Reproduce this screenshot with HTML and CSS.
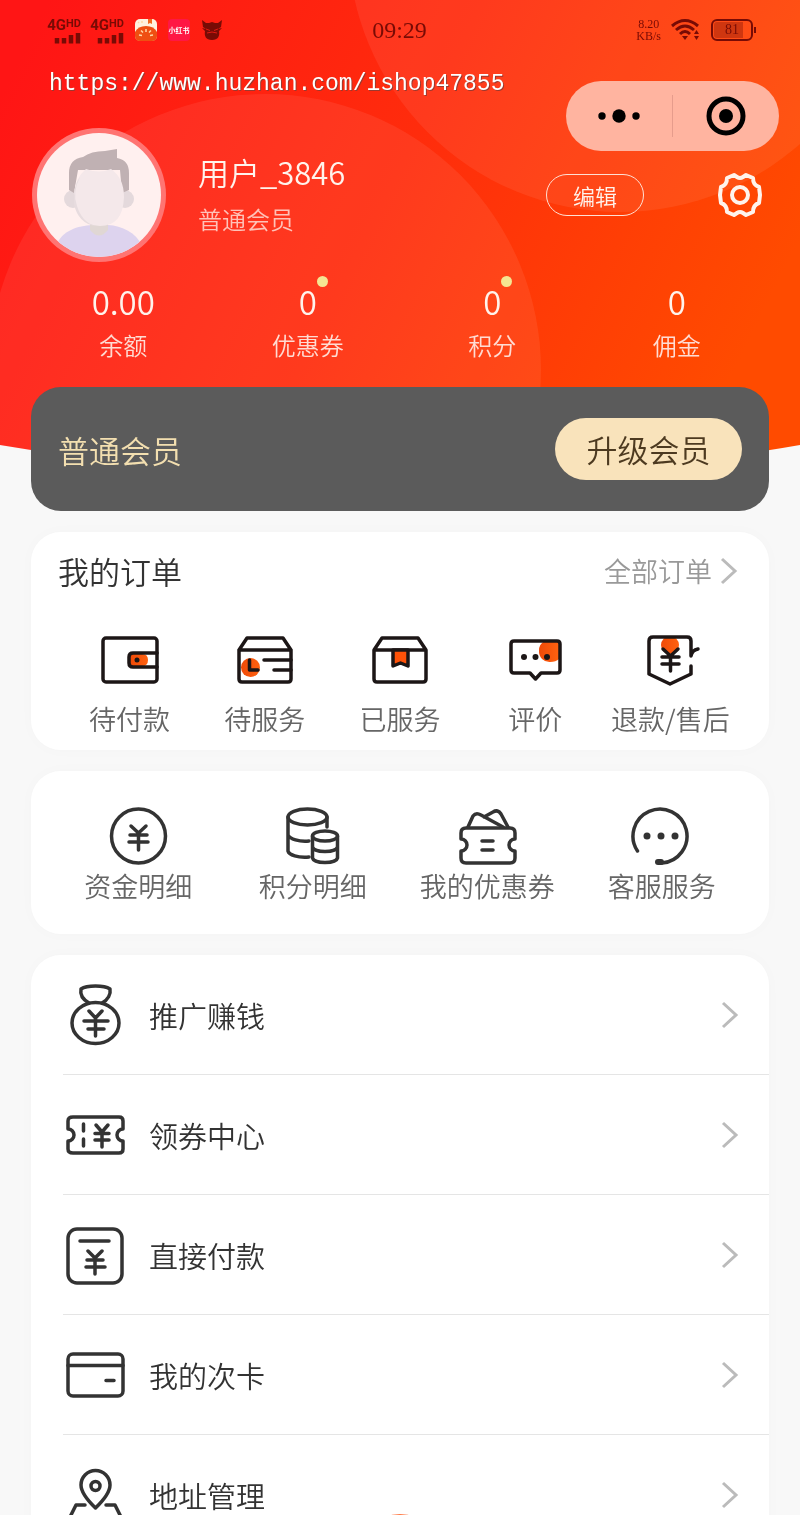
FILE: index.html
```html
<!DOCTYPE html>
<html lang="zh-CN">
<head>
    <meta charset="UTF-8">
    <meta name="viewport" content="width=device-width, initial-scale=1.0">
    <title>我的</title>
    <link rel="stylesheet" href="styles.css">
</head>
<body>
    <div class="app">
        <svg class="header-bg" viewBox="0 0 800 480" preserveAspectRatio="none" aria-hidden="true">
            <defs>
                <linearGradient id="headerGradient" x1="0" y1="0.2" x2="1" y2="0.5">
                    <stop offset="0" stop-color="#ff1515"/>
                    <stop offset="0.5" stop-color="#ff2c0c"/>
                    <stop offset="1" stop-color="#ff4b00"/>
                </linearGradient>
                <linearGradient id="orange" x1="0" y1="0" x2="1" y2="0">
                    <stop offset="0" stop-color="#f04a08"/>
                    <stop offset="1" stop-color="#ff6210"/>
                </linearGradient>
                <clipPath id="headerShape">
                    <path d="M0 0H800V445Q400 515 0 445Z"/>
                </clipPath>
            </defs>
            <g clip-path="url(#headerShape)">
                <rect width="800" height="480" fill="url(#headerGradient)"/>
                <circle cx="265" cy="370" r="276" fill="#fff" opacity="0.07"/>
                <circle cx="620" cy="-60" r="272" fill="#fff" opacity="0.07"/>
            </g>
        </svg>

        <div class="status-bar">
            <div class="status-left">
                <div class="signal">
                    <span class="signal-name">4G<small>HD</small></span>
                    <svg width="27" height="12" viewBox="0 0 27 12"><path d="M3 11.500V6M10 11.500V6M17 11.500V3M24 11.500V1" stroke="currentColor" stroke-width="4.500"/></svg>
                </div>
                <div class="signal">
                    <span class="signal-name">4G<small>HD</small></span>
                    <svg width="27" height="12" viewBox="0 0 27 12"><path d="M3 11.500V6M10 11.500V6M17 11.500V3M24 11.500V1" stroke="currentColor" stroke-width="4.500"/></svg>
                </div>
                <svg class="notice" width="24" height="24" viewBox="0 0 24 24">
                    <rect x="1" y="1" width="22" height="22" rx="5" fill="#fff1df"/>
                    <path d="M14 1h4v5l-2-1-2 1z" fill="#f26a20"/>
                    <path d="M1 14Q4 8 12 8T23 14V18Q23 23 18 23H6Q1 23 1 18Z" fill="#ef4f12"/>
                    <path d="M5 17l3 .5M7 12.500l2 2M12 11v3M17 12.500l-2 2M19 17l-3 .5M4 4l1 1M8 3v2" stroke="#ffd9a5" stroke-width="1.500"/>
                </svg>
                <span class="notice notice-red">小红书</span>
                <svg class="notice" width="24" height="24" viewBox="0 0 24 24" fill="currentColor">
                    <path d="M2 2l4 3h3l3-1 3 1h3l4-3-1 7-3 2 4-1-3 3c1 5-1 9-7 9s-8-4-7-9L2 10l4 1-3-2Z"/>
                    <path d="M6 11l4 1.500M18 11l-4 1.500M7 15q5-2 10 0" stroke="#e01a12" fill="none"/>
                </svg>
            </div>
            <time class="clock">09:29</time>
            <div class="status-right">
                <span class="speed">8.20<br>KB/s</span>
                <svg width="30" height="24" viewBox="0 0 30 24" fill="none" stroke="currentColor" stroke-width="3">
                    <path d="M1 8Q14-3 27 8M5 12Q14 4 23 12M9 16Q14 11 19 16"/>
                    <path d="M11 18h6l-3 4Z" fill="currentColor" stroke="none"/>
                    <path d="M23 16l2.500-4 2.500 4ZM23 18l2.500 4 2.500-4Z" fill="currentColor" stroke="none"/>
                </svg>
                <span class="battery">81</span>
            </div>
        </div>

        <div class="capsule">
            <button class="capsule-btn" aria-label="更多">
                <svg width="44" height="16" viewBox="0 0 44 16"><circle cx="5" cy="8" r="3.700"/><circle cx="22" cy="8" r="6.700"/><circle cx="39" cy="8" r="3.700"/></svg>
            </button>
            <button class="capsule-btn" aria-label="关闭">
                <svg width="40" height="40" viewBox="0 0 40 40"><circle cx="20" cy="20" r="17" fill="none" stroke="#000" stroke-width="5"/><circle cx="20" cy="20" r="7"/></svg>
            </button>
        </div>

        <p class="site-url">https://www.huzhan.com/ishop47855</p>

        <header class="profile">
            <svg class="avatar" viewBox="0 0 134 134">
                <defs><clipPath id="face"><circle cx="67" cy="67" r="62"/></clipPath></defs>
                <circle cx="67" cy="67" r="67" fill="#ff7472"/>
                <circle cx="67" cy="67" r="62" fill="#fff0ef"/>
                <g clip-path="url(#face)">
                    <path d="M24 118C30 102 46 98 60 97H76C90 98 104 104 110 118V134H24Z" fill="#ddd3ee"/>
                    <path d="M58 94h18v8q-9 11-18 0Z" fill="#e0d7d4"/>
                    <circle cx="41" cy="71" r="9" fill="#e4d9dc"/>
                    <circle cx="93" cy="71" r="9" fill="#e4d9dc"/>
                    <path d="M37 62V45Q37 31 51 29Q59 23 73 23L85 21V30Q97 32 97 45V62L90 65L88 42H46L42 65Z" fill="#c0b1b3"/>
                    <path d="M42 66Q43 50 54 41Q67 46 79 41Q92 50 92 69Q91 98 68 98Q43 97 42 66Z" fill="#f4e8ea"/>
                    <path d="M48 49Q40 65 45 78Q50 94 63 98Q46 95 42 76Q41 58 48 49Z" fill="#e7dcdf"/>
                </g>
            </svg>
            <div class="profile-info">
                <h1 class="user-name">用户_3846</h1>
                <p class="user-level">普通会员</p>
            </div>
            <button class="edit-btn">编辑</button>
            <button class="setting-btn" aria-label="设置">
                <svg width="46" height="46" viewBox="0 0 46 46" fill="none" stroke="#fff3ec" stroke-width="4" stroke-linejoin="round">
                    <path d="M17 3L20 5Q23 7 26 5L29 3L36 6Q36 13 42 15L43 23L42 31Q36 33 36 40L29 43L26 41Q23 39 20 41L17 43L10 40Q10 33 4 31L3 23L4 15Q10 13 10 6Z"/>
                    <circle cx="23" cy="23" r="8"/>
                </svg>
            </button>
        </header>

        <div class="stats">
            <a class="stat" href="#"><span class="stat-num">0.00</span><span class="stat-label">余额</span></a>
            <a class="stat" href="#"><span class="stat-num has-dot">0</span><span class="stat-label">优惠券</span></a>
            <a class="stat" href="#"><span class="stat-num has-dot">0</span><span class="stat-label">积分</span></a>
            <a class="stat" href="#"><span class="stat-num">0</span><span class="stat-label">佣金</span></a>
        </div>

        <main class="content">
            <section class="member">
                <span>普通会员</span>
                <button class="upgrade-btn">升级会员</button>
            </section>

            <section class="card orders">
                <div class="orders-head">
                    <h2>我的订单</h2>
                    <a class="all-orders" href="#">全部订单<svg class="arrow" viewBox="0 0 18 28"><path d="M2 2L15 14L2 26"/></svg></a>
                </div>
                <nav class="order-grid">
                    <a class="item" href="#">
                        <svg class="icon" viewBox="0 0 64 64">
                            <path d="M32 26H44Q50 26 50 32T44 38H32Z" fill="url(#orange)" stroke="none"/>
                            <rect x="5" y="10" width="54" height="44" rx="3"/>
                            <path d="M59 25H35Q31 25 31 29V35Q31 39 35 39H59"/>
                            <circle cx="39" cy="32" r="2.500" fill="currentColor" stroke="none"/>
                        </svg>
                        <span>待付款</span>
                    </a>
                    <a class="item" href="#">
                        <svg class="icon" viewBox="0 0 64 64">
                            <circle cx="17.500" cy="39.500" r="9.500" fill="url(#orange)" stroke="none"/>
                            <path d="M6 22V51Q6 54 9 54H55Q58 54 58 51V22ZM6 22L14 10H50L58 22"/>
                            <path d="M16.500 32V42H25M31 32H58M41 42H58"/>
                        </svg>
                        <span>待服务</span>
                    </a>
                    <a class="item" href="#">
                        <svg class="icon" viewBox="0 0 64 64">
                            <path d="M6 22V51Q6 54 9 54H55Q58 54 58 51V22ZM6 22L14 10H50L58 22"/>
                            <path d="M25 22V38L32.500 35L40 38V22Z" fill="#ff5208"/>
                        </svg>
                        <span>已服务</span>
                    </a>
                    <a class="item" href="#">
                        <svg class="icon" viewBox="0 0 64 64">
                            <path d="M36 23A10.500 10.500 0 0 1 42 13H56V31Q53 34 47 34A10.500 10.500 0 0 1 36 23Z" fill="url(#orange)" stroke="none"/>
                            <path d="M11 13H54Q57 13 57 16V42Q57 45 54 45H38L32.500 51L27 45H11Q8 45 8 42V16Q8 13 11 13Z"/>
                            <g fill="currentColor" stroke="none"><circle cx="21" cy="29" r="3"/><circle cx="32.500" cy="29" r="3"/><circle cx="44" cy="29" r="3"/></g>
                        </svg>
                        <span>评价</span>
                    </a>
                    <a class="item" href="#">
                        <svg class="icon" viewBox="0 0 64 64">
                            <circle cx="32" cy="17" r="9" fill="url(#orange)" stroke="none"/>
                            <path d="M53 38V46L32 56L11 46V13Q11 9 15 9H49Q53 9 53 13V28Q54 22 60 21"/>
                            <path d="M25 21L32.500 28L40 21M32.500 28V43M24 29H41M24 36H41"/>
                        </svg>
                        <span>退款/售后</span>
                    </a>
                </nav>
            </section>

            <nav class="card services">
                <a class="item" href="#">
                    <svg class="icon" viewBox="0 0 64 64">
                        <circle cx="32.500" cy="32" r="27"/>
                        <path d="M25 22L32.500 29L40 22M32.500 29V46M24 31H41M23 38H42"/>
                    </svg>
                    <span>资金明细</span>
                </a>
                <a class="item" href="#">
                    <svg class="icon" viewBox="0 0 64 64">
                        <ellipse cx="26.500" cy="13" rx="19.500" ry="8"/>
                        <path d="M7 13V47C8 51 17 54 28 53M7 31C9 35 18 38 28 37M46 13V23"/>
                        <ellipse cx="44" cy="32" rx="12.500" ry="5"/>
                        <path d="M31.500 32V54C33 60 55 60 56.500 54V32M31.500 43C33 49 55 49 56.500 43"/>
                    </svg>
                    <span>积分明细</span>
                </a>
                <a class="item" href="#">
                    <svg class="icon" viewBox="0 0 64 64">
                        <path d="M11 24H55Q60 24 60 29V35A6 6 0 0 0 60 47V54Q60 59 55 59H11Q6 59 6 54V47A6 6 0 0 0 6 35V29Q6 24 11 24Z"/>
                        <path d="M13 23L18 12Q21 8 26 11L48 23M29 13L38 8Q43 5 46 10L53 23M27 37H38M27 46H38"/>
                    </svg>
                    <span>我的优惠券</span>
                </a>
                <a class="item" href="#">
                    <svg class="icon" viewBox="0 0 64 64">
                        <path d="M7.500 47A27 27 0 1 1 32 59"/>
                        <rect x="25" y="55" width="9" height="6" rx="3" fill="currentColor" stroke="none"/>
                        <g fill="currentColor" stroke="none"><circle cx="17" cy="32" r="3.500"/><circle cx="31" cy="32" r="3.500"/><circle cx="45" cy="32" r="3.500"/></g>
                    </svg>
                    <span>客服服务</span>
                </a>
            </nav>

            <ul class="card menu">
                <li><a class="menu-link" href="#">
                    <svg class="icon" viewBox="0 0 64 64">
                        <ellipse cx="32.500" cy="40" rx="23.500" ry="20.500"/>
                        <path d="M26 20C19 16 17 11 18 6C24 2 41 2 47 6C48 11 45 17 39 20"/>
                        <path d="M26 28L32.500 35L39 28M32.500 35V53M21 38H45M25 46H41"/>
                    </svg>
                    <span>推广赚钱</span>
                    <svg class="arrow" viewBox="0 0 18 28"><path d="M2 2L15 14L2 26"/></svg>
                </a></li>
                <li><a class="menu-link" href="#">
                    <svg class="icon" viewBox="0 0 64 64">
                        <path d="M10 14H56Q60 14 60 18V26A6 6 0 0 0 60 38V46Q60 50 56 50H10Q5 50 5 46V38A6 6 0 0 0 5 26V18Q5 14 10 14Z"/>
                        <path d="M20.500 21V28M20.500 36V43M33 22L39 29L45 22M39 29V44M32 30.500H46M32 37H46"/>
                    </svg>
                    <span>领券中心</span>
                    <svg class="arrow" viewBox="0 0 18 28"><path d="M2 2L15 14L2 26"/></svg>
                </a></li>
                <li><a class="menu-link" href="#">
                    <svg class="icon" viewBox="0 0 64 64">
                        <rect x="5" y="6" width="54" height="54" rx="9"/>
                        <path d="M17 18H46M25 28L32 35L39 28M32 35V51M24 37H40M23 44H42"/>
                    </svg>
                    <span>直接付款</span>
                    <svg class="arrow" viewBox="0 0 18 28"><path d="M2 2L15 14L2 26"/></svg>
                </a></li>
                <li><a class="menu-link" href="#">
                    <svg class="icon" viewBox="0 0 64 64">
                        <rect x="5" y="11" width="55" height="42" rx="5"/>
                        <path d="M5 22.500H60M43 37.500H51"/>
                    </svg>
                    <span>我的次卡</span>
                    <svg class="arrow" viewBox="0 0 18 28"><path d="M2 2L15 14L2 26"/></svg>
                </a></li>
                <li><a class="menu-link" href="#">
                    <svg class="icon" viewBox="0 0 64 64">
                        <path d="M32.500 45Q18 31 18 22A14.500 14.500 0 0 1 47 22Q47 31 32.500 45Z"/>
                        <circle cx="32.500" cy="23" r="4.500"/>
                        <path d="M22 42H13L4 60H61L52 42H43"/>
                    </svg>
                    <span>地址管理</span>
                    <svg class="arrow" viewBox="0 0 18 28"><path d="M2 2L15 14L2 26"/></svg>
                </a></li>
            </ul>
        </main>
        <div class="tab-bump"></div>
    </div>
</body>
</html>
```

FILE: styles.css
```css
* {
    box-sizing: border-box;
}
body {
    margin: 0;
    background: #f8f8f8;
    color: #333;
    font-family: "Noto Sans CJK SC", sans-serif;
    font-weight: 350;
}
h1, h2, p, ul {
    margin: 0;
    padding: 0;
    font-weight: inherit;
}
ul {
    list-style: none;
}
a {
    color: inherit;
    text-decoration: none;
}
button {
    border: none;
    padding: 0;
    background: none;
    color: inherit;
    font: inherit;
    cursor: pointer;
}
svg {
    display: block;
    flex-shrink: 0;
}
.app {
    position: relative;
    height: 100vh;
    overflow: hidden auto;
    scrollbar-width: none;
}
.header-bg {
    position: absolute;
    top: 0;
    left: 0;
    width: 100%;
    height: 480px;
    z-index: -1;
}

/* status bar */
.status-bar {
    display: grid;
    grid-template-columns: 1fr auto 1fr;
    align-items: center;
    height: 60px;
    padding: 0 47px 0 46px;
    color: #780b05;
}
.status-left, .status-right {
    display: flex;
    align-items: center;
    gap: 8px;
}
.status-right {
    justify-content: flex-end;
    gap: 10px;
}
.signal {
    display: flex;
    flex-direction: column;
    align-items: flex-end;
    width: 35px;
}
.signal-name {
    font: bold 15px/13px Roboto, sans-serif;
    white-space: nowrap;
}
.signal-name small {
    font-size: 11px;
    vertical-align: 3px;
}
.notice {
    margin-left: 2px;
}
.notice-red {
    width: 22px;
    border-radius: 4px;
    background: #ff1744;
    color: #fff;
    font-size: 7px;
    font-weight: bold;
    line-height: 22px;
    text-align: center;
}
.clock {
    font: 24px/30px "Liberation Serif", serif;
}
.speed {
    font: 12px/12px "Liberation Serif", serif;
    text-align: center;
}
.battery {
    position: relative;
    width: 42px;
    border: 2px solid #780b05;
    border-radius: 6px;
    background: linear-gradient(90deg, #cf3610 80%, transparent 80%) content-box;
    padding: 1px;
    font: 14px/16px "Liberation Serif", serif;
    text-align: center;
}
.battery::after {
    content: "";
    position: absolute;
    right: -5px;
    top: 6px;
    width: 2px;
    height: 6px;
    background: #780b05;
}

/* floating mini program menu */
.capsule {
    position: absolute;
    top: 81px;
    right: 21px;
    display: flex;
    align-items: center;
    width: 213px;
    height: 70px;
    border-radius: 35px;
    background: #ffb4a0;
}
.capsule-btn {
    display: flex;
    flex: 1;
    align-items: center;
    justify-content: center;
    height: 42px;
}
.capsule-btn + .capsule-btn {
    border-left: 1px solid #e69c8c;
}

.site-url {
    padding: 10px 49px 0;
    color: #fff;
    font: 23px/28px "Liberation Mono", monospace;
    text-shadow: 1px 1px 0 #9a3a30;
}

/* profile */
.profile {
    display: flex;
    align-items: center;
    padding: 30px 37px 0 32px;
    color: #fff3ec;
}
.avatar {
    width: 134px;
    height: 134px;
}
.profile-info {
    flex: 1;
    padding-left: 32px;
}
.user-name {
    font-size: 31px;
    line-height: 48px;
}
.user-level {
    color: #ffc2b8;
    font-size: 24px;
    line-height: 46px;
}
.edit-btn {
    width: 98px;
    height: 42px;
    margin-right: 73px;
    border: 1px solid #ffe0d4;
    border-radius: 21px;
    font-size: 22px;
    line-height: 40px;
}
.setting-btn {
    width: 46px;
    height: 46px;
}

.stats {
    display: grid;
    grid-template-columns: repeat(4, 1fr);
    padding: 16px 31px 21px;
    color: #fff3ec;
    text-align: center;
}
.stat {
    display: flex;
    flex-direction: column;
    align-items: center;
}
.stat-num {
    position: relative;
    font-size: 33px;
    line-height: 46px;
}
.stat-num.has-dot::after {
    content: "";
    position: absolute;
    top: -2px;
    right: -11px;
    width: 11px;
    height: 11px;
    border-radius: 50%;
    background: #f5e592;
}
.stat-label {
    color: #ffdcd3;
    font-size: 24px;
    line-height: 42px;
}

/* cards */
.content {
    display: flex;
    flex-direction: column;
    gap: 21px;
    padding: 0 31px;
}
.member {
    display: flex;
    align-items: center;
    justify-content: space-between;
    height: 124px;
    padding: 0 27px;
    border-radius: 30px;
    background: #5b5b5b;
    color: #f3dfb0;
    font-size: 31px;
}
.upgrade-btn {
    width: 187px;
    height: 62px;
    border-radius: 31px;
    background: #f9e3bb;
    color: #4d3a20;
    line-height: 62px;
}
.card {
    border-radius: 30px;
    background: #fff;
    box-shadow: 0 0 16px rgba(0, 0, 0, 0.02);
}
.orders {
    padding: 21px 31px 13px;
}
.orders-head {
    display: flex;
    justify-content: space-between;
    margin: 0 0 39px -4px;
    line-height: 36px;
}
.orders-head h2 {
    font-size: 31px;
}
.all-orders {
    display: flex;
    align-items: center;
    gap: 8px;
    color: #999;
    font-size: 27px;
}
.arrow {
    width: 18px;
    height: 28px;
    fill: none;
    stroke: #bbb;
    stroke-width: 3;
}
.order-grid {
    display: grid;
    grid-template-columns: repeat(5, 1fr);
}
.order-grid .item {
    gap: 9px;
    color: #1c1616;
}
.item {
    display: flex;
    flex-direction: column;
    align-items: center;
    color: #333;
}
.item span {
    color: #666;
    font-size: 27px;
    line-height: 36px;
    white-space: nowrap;
}
.icon {
    width: 64px;
    height: 64px;
    fill: none;
    stroke: currentColor;
    stroke-width: 3.5;
    stroke-linecap: round;
    stroke-linejoin: round;
}
.services {
    display: grid;
    grid-template-columns: repeat(4, 1fr);
    padding: 33px 20px 30px;
}
.menu li {
    height: 120px;
    margin-left: 32px;
    border-bottom: 1px solid #e5e5e5;
}
.menu-link {
    display: flex;
    align-items: center;
    gap: 22px;
    height: 100%;
    padding-right: 30px;
    font-size: 29px;
}
.menu-link span {
    flex: 1;
}

/* top edge of the round tab button */
.tab-bump {
    position: fixed;
    bottom: -79px;
    left: 50%;
    width: 80px;
    height: 80px;
    margin-left: -40px;
    border-radius: 50%;
    background: #ff7a45;
}
```
